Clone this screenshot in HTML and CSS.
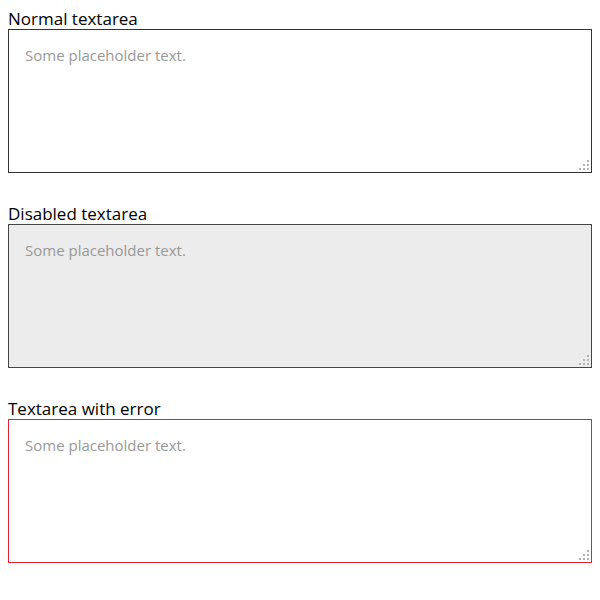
FILE: index.html
```html
<!DOCTYPE html>
<html>
<head>
<meta charset="utf-8">
<link rel="stylesheet" href="styles.css">
</head>
<body>
<div class="field">
  <label class="label" for="t1">Normal textarea</label>
  <div class="box">
    <textarea id="t1" class="ta" placeholder="Some placeholder text."></textarea>
    <span class="grip"></span>
  </div>
</div>
<div class="field">
  <label class="label" for="t2">Disabled textarea</label>
  <div class="box">
    <textarea id="t2" class="ta ta-disabled" placeholder="Some placeholder text." disabled></textarea>
    <span class="grip"></span>
  </div>
</div>
<div class="field">
  <label class="label" for="t3">Textarea with error</label>
  <div class="box">
    <textarea id="t3" class="ta ta-error" placeholder="Some placeholder text."></textarea>
    <span class="grip"></span>
  </div>
</div>
</body>
</html>
```
FILE: styles.css
```css
body {
  margin: 8px;
  font-family: "Open Sans", "Noto Sans", sans-serif;
  color: #000;
  background: #fff;
}
.field {
  display: flex;
  flex-direction: column;
  margin-bottom: 30px;
}
.label {
  font-size: 17px;
  line-height: 21px;
}
.box {
  position: relative;
}
.ta {
  display: block;
  box-sizing: border-box;
  width: 100%;
  height: 144px;
  margin: 0;
  padding: 15px 16px;
  border: 1px solid #333;
  border-radius: 0;
  background: #fff;
  font-family: "Open Sans", "Noto Sans", sans-serif;
  font-size: 15px;
  line-height: 20px;
  resize: none;
  outline: none;
}
.ta::placeholder {
  color: #999;
  opacity: 1;
}
.ta-disabled {
  background: #ececec;
  border-color: #444;
}
.ta-error {
  border-color: #e4222f;
}
.grip {
  position: absolute;
  right: 2px;
  bottom: 2px;
  width: 14px;
  height: 14px;
  background:
    radial-gradient(circle, #b3b3b3 0 1px, transparent 1.2px) 10px 10px / 4px 4px no-repeat,
    radial-gradient(circle, #b3b3b3 0 1px, transparent 1.2px) 6px 10px / 4px 4px no-repeat,
    radial-gradient(circle, #b3b3b3 0 1px, transparent 1.2px) 2px 10px / 4px 4px no-repeat,
    radial-gradient(circle, #b3b3b3 0 1px, transparent 1.2px) 10px 6px / 4px 4px no-repeat,
    radial-gradient(circle, #b3b3b3 0 1px, transparent 1.2px) 6px 6px / 4px 4px no-repeat,
    radial-gradient(circle, #b3b3b3 0 1px, transparent 1.2px) 10px 2px / 4px 4px no-repeat;
}
```
